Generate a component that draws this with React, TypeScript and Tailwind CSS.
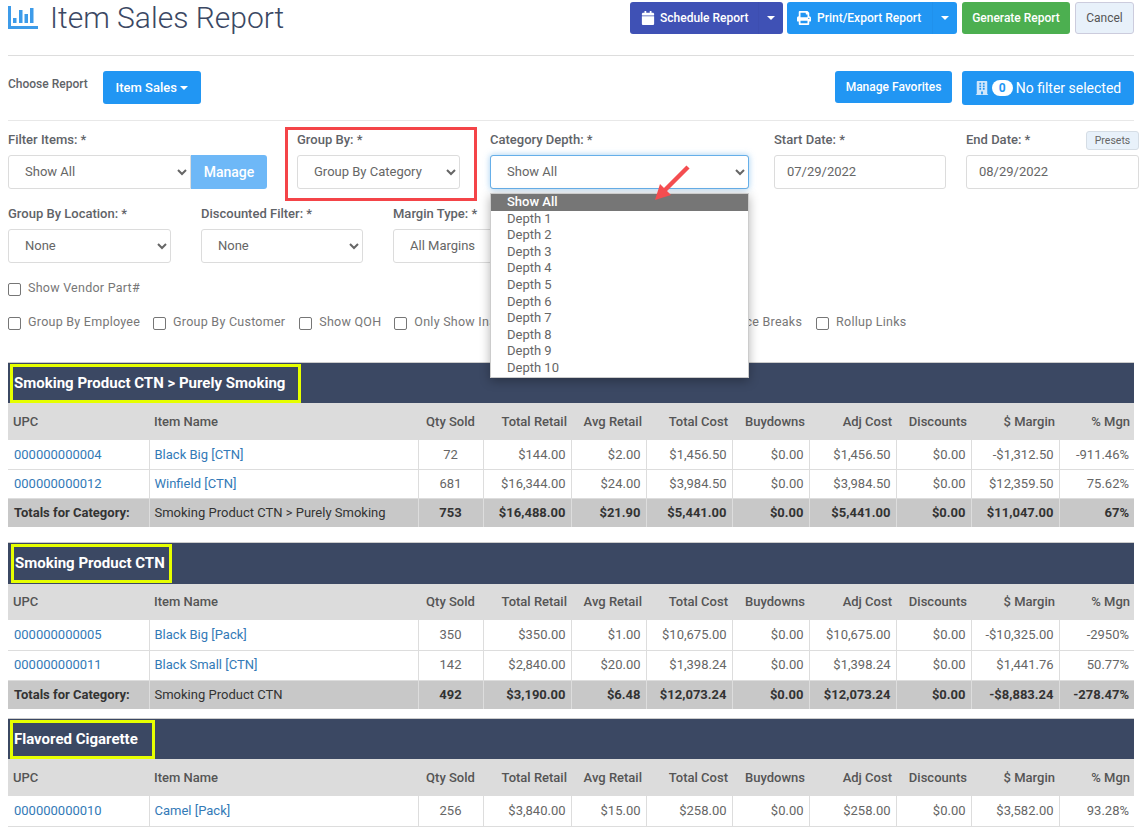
import React from 'react';
import { FaCalendar, FaPrint, FaBuilding } from 'react-icons/fa';

const COLS = ['w-[141px]', 'w-[269px]', 'w-[65px]', 'w-[88px]', 'w-[75px]', 'w-[86px]', 'w-[77px]', 'w-[87px]', 'w-[75px]', 'w-[88px]', 'w-[75px]'];
const HEADERS = ['UPC', 'Item Name', 'Qty Sold', 'Total Retail', 'Avg Retail', 'Total Cost', 'Buydowns', 'Adj Cost', 'Discounts', '$ Margin', '% Mgn'];
const DEPTHS = ['Depth 1', 'Depth 2', 'Depth 3', 'Depth 4', 'Depth 5', 'Depth 6', 'Depth 7', 'Depth 8', 'Depth 9', 'Depth 10'];

const GROUPS = [
  {
    title: 'Smoking Product CTN > Purely Smoking',
    boxClass: 'w-[291px]',
    bandClass: 'h-[41px]',
    headClass: 'h-[37px]',
    rowClass: 'h-[29px]',
    wrap: 'mb-[15px]',
    rows: [
      ['000000000004', 'Black Big [CTN]', '72', '$144.00', '$2.00', '$1,456.50', '$0.00', '$1,456.50', '$0.00', '-$1,312.50', '-911.46%'],
      ['000000000012', 'Winfield [CTN]', '681', '$16,344.00', '$24.00', '$3,984.50', '$0.00', '$3,984.50', '$0.00', '$12,359.50', '75.62%'],
    ],
    totals: ['Totals for Category:', 'Smoking Product CTN > Purely Smoking', '753', '$16,488.00', '$21.90', '$5,441.00', '$0.00', '$5,441.00', '$0.00', '$11,047.00', '67%'],
  },
  {
    title: 'Smoking Product CTN',
    boxClass: 'ml-[1px] w-[161px]',
    bandClass: 'h-[42px]',
    headClass: 'h-[36px]',
    rowClass: 'h-[30px]',
    wrap: 'mb-[9px]',
    rows: [
      ['000000000005', 'Black Big [Pack]', '350', '$350.00', '$1.00', '$10,675.00', '$0.00', '$10,675.00', '$0.00', '-$10,325.00', '-2950%'],
      ['000000000011', 'Black Small [CTN]', '142', '$2,840.00', '$20.00', '$1,398.24', '$0.00', '$1,398.24', '$0.00', '$1,441.76', '50.77%'],
    ],
    totals: ['Totals for Category:', 'Smoking Product CTN', '492', '$3,190.00', '$6.48', '$12,073.24', '$0.00', '$12,073.24', '$0.00', '-$8,883.24', '-278.47%'],
  },
  {
    title: 'Flavored Cigarette',
    boxClass: 'w-[145px]',
    bandClass: 'h-[41px]',
    headClass: 'h-[37px]',
    rowClass: 'h-[30px]',
    wrap: '',
    rows: [['000000000010', 'Camel [Pack]', '256', '$3,840.00', '$15.00', '$258.00', '$0.00', '$258.00', '$0.00', '$3,582.00', '93.28%']],
    totals: null,
  },
];

const align = (i: number) => (i < 2 ? 'text-left' : i === 2 ? 'text-center' : 'text-right');

function Label({ children }: { children: React.ReactNode }) {
  return <div className="h-[18px] text-[13px] leading-[18px] font-medium text-[#5f6368]">{children}</div>;
}

function Field({ label, value, className }: { label: string; value: string; className: string }) {
  return (
    <div className={className}>
      <Label>{label}</Label>
      <select className="mt-[6px] h-[34px] w-full rounded-[3px] border border-[#dcdcdc] bg-white pb-[2px] pl-[12px] text-[13px] text-[#666]" defaultValue={value}>
        <option>{value}</option>
      </select>
    </div>
  );
}

function DateField({ label, value, className }: { label: string; value: string; className: string }) {
  return (
    <div className={className}>
      <Label>{label}</Label>
      <div className="mt-[6px] flex h-[34px] items-center rounded-[3px] border border-[#dcdcdc] bg-white pl-[12px] text-[13px] text-[#666]">{value}</div>
    </div>
  );
}

function Check({ label, className }: { label: string; className?: string }) {
  return (
    <label className={`flex items-center gap-[7px] text-[12.5px] whitespace-nowrap text-[#777] tracking-[0.25px] ${className ?? ''}`}>
      <span className="mt-[2px] h-[13px] w-[13px] shrink-0 rounded-[2px] border border-[#767676] bg-white" />
      {label}
    </label>
  );
}

function Caret() {
  return <span className="inline-block h-0 w-0 border-x-[4px] border-t-[4px] border-x-transparent border-t-white" />;
}

function Group({ group }: { group: (typeof GROUPS)[number] }) {
  return (
    <div className={group.wrap}>
      <div className={`flex items-center border-t border-[#ccc] bg-[#3b4863] pl-[2px] ${group.bandClass}`}>
        <div className={`flex h-[39px] items-center border-[3px] border-[#e6ff00] pl-[1px] text-[15px] font-bold text-white ${group.boxClass}`}>{group.title}</div>
      </div>
      <table className="w-full table-fixed border-collapse text-[13px]">
        <colgroup>
          {COLS.map((c, i) => (
            <col key={i} className={c} />
          ))}
        </colgroup>
        <thead>
          <tr className={`bg-[#dcdcdc] ${group.headClass}`}>
            {HEADERS.map((h, i) => (
              <th key={h} className={`font-medium text-[#555] ${i < 2 ? 'px-[5px]' : 'px-[4px]'} ${align(i)}`}>
                {h}
              </th>
            ))}
          </tr>
        </thead>
        <tbody>
          {group.rows.map((r) => (
            <tr key={r[0]} className={`border-b border-[#ddd] bg-white ${group.rowClass}`}>
              {r.map((v, i) => (
                <td key={i} className={`border-r border-[#ddd] last:border-r-0 ${i === 0 ? 'px-[6px]' : 'px-[5px]'} ${i < 2 ? 'text-[#337ab7]' : 'text-[#666]'} ${align(i)}`}>
                  {v}
                </td>
              ))}
            </tr>
          ))}
          {group.totals && (
            <tr className="h-[29px] bg-[#c8c8c8]">
              {group.totals.map((v, i) => (
                <td key={i} className={`overflow-hidden border-r border-[#ddd] whitespace-nowrap last:border-r-0 text-[#333] ${i === 0 ? 'px-[6px]' : 'px-[5px]'} ${i === 1 ? 'font-normal' : 'font-bold'} ${align(i)}`}>
                  {v}
                </td>
              ))}
            </tr>
          )}
        </tbody>
      </table>
    </div>
  );
}

export default function App() {
  return (
    <div className="relative h-[829px] w-[1146px] overflow-hidden bg-white pl-[8px] pr-[12px] font-['Roboto',sans-serif]">
      <div className="flex h-[56px] items-start border-b border-[#ddd] pt-[2px]">
        <svg viewBox="0 0 30 23" className="mt-[4px] h-[23px] w-[30px] text-[#3d9be9]" fill="currentColor">
          <rect x="0" y="0" width="3" height="23" />
          <rect x="0" y="20" width="30" height="3" />
          <rect x="5" y="12" width="3.5" height="5" />
          <rect x="11" y="4" width="3.5" height="13" />
          <rect x="16.5" y="8" width="3.5" height="9" />
          <rect x="22" y="2" width="3.5" height="15" />
        </svg>
        <h1 className="ml-[12px] text-[30px] leading-[32px] font-light text-[#3b4863]">Item Sales Report</h1>
        <div className="ml-auto flex h-[32px] items-stretch text-[12px] font-medium text-white">
          <button className="flex w-[153px] items-center justify-between rounded-[3px] bg-[#3f51b5]">
            <span className="flex items-center gap-[5px] pl-[11px]">
              <FaCalendar className="text-[14px]" />
              Schedule Report
            </span>
            <span className="flex h-full w-[25px] items-center justify-center border-l border-[#3d4eb0]">
              <Caret />
            </span>
          </button>
          <button className="ml-[4px] flex w-[170px] items-center justify-between rounded-[3px] bg-[#2196f3]">
            <span className="flex items-center gap-[6px] pl-[10px]">
              <FaPrint className="text-[14px]" />
              Print/Export Report
            </span>
            <span className="flex h-full w-[25px] items-center justify-center border-l border-[#2091ec]">
              <Caret />
            </span>
          </button>
          <button className="ml-[5px] w-[108px] rounded-[3px] bg-[#4caf50]">Generate Report</button>
          <button className="ml-[5px] w-[59px] rounded-[3px] border border-[#ccd] bg-[#e8f1fa] font-normal text-[#555]">Cancel</button>
        </div>
      </div>

      <div className="flex h-[65px] items-start border-b border-[#e8e8e8] pt-[15px]">
        <span className="mt-[4px] text-[12px] font-medium text-[#5f6368]">Choose Report</span>
        <button className="ml-[15px] flex h-[33px] w-[98px] items-center justify-center gap-[3px] rounded-[3px] bg-[#2196f3] text-[13px] font-medium text-white">
          Item Sales <Caret />
        </button>
        <button className="ml-auto h-[32px] w-[117px] rounded-[3px] bg-[#2196f3] text-[12px] font-medium text-white">Manage Favorites</button>
        <button className="ml-[10px] flex h-[34px] w-[172px] items-center justify-center gap-[3px] rounded-[3px] bg-[#2196f3] text-[14px] text-white">
          <FaBuilding className="text-[14px] text-[#cfe6fb]" />
          <span className="flex h-[16px] w-[21px] items-center justify-center rounded-full bg-white text-[12px] font-bold text-[#2196f3]">0</span>
          No filter selected
        </button>
      </div>

      <div className="mt-[10px] flex h-[62px] w-[1131px]">
        <div className="w-[259px]">
          <Label>Filter Items: *</Label>
          <div className="mt-[6px] flex">
            <select className="h-[34px] w-[183px] rounded-l-[3px] border border-[#dcdcdc] bg-white pb-[2px] pl-[12px] text-[13px] text-[#666]" defaultValue="Show All">
              <option>Show All</option>
            </select>
            <button className="h-[34px] w-[76px] rounded-r-[3px] bg-[#6eb8f7] text-[14px] font-medium text-white">Manage</button>
          </div>
        </div>
        <Field label="Group By: *" value="Group By Category" className="ml-[30px] w-[163px]" />
        <Field label="Category Depth: *" value="Show All" className="ml-[30px] w-[259px]" />
        <DateField label="Start Date: *" value="07/29/2022" className="ml-[25px] w-[172px]" />
        <DateField label="End Date: *" value="08/29/2022" className="ml-[20px] w-[173px]" />
      </div>

      <div className="mt-[12px] flex h-[58px]">
        <Field label="Group By Location: *" value="None" className="w-[163px]" />
        <Field label="Discounted Filter: *" value="None" className="ml-[30px] w-[162px]" />
        <Field label="Margin Type: *" value="All Margins" className="ml-[30px] w-[163px]" />
      </div>

      <div className="mt-[16px] h-[19px]">
        <Check label="Show Vendor Part#" />
      </div>
      <div className="mt-[15px] flex h-[18px]">
        <Check label="Group By Employee" />
        <Check label="Group By Customer" className="ml-[13px]" />
        <Check label="Show QOH" className="ml-[14px]" />
        <Check label="Only Show Inactive Items" className="ml-[13px] w-[126px]" />
        <Check label="Show Price Breaks" className="ml-[154px]" />
        <Check label="Rollup Links" className="ml-[14px]" />
      </div>

      <div className="mt-[31px] w-[1126px]">
        {GROUPS.map((g) => (
          <Group key={g.title} group={g} />
        ))}
      </div>

      {/* things floating over the page */}
      <button className="absolute left-[1086px] top-[131px] h-[19px] w-[53px] rounded-[3px] border border-[#d5dde5] bg-[#e8f1fa] text-[10.5px] text-[#666]">Presets</button>
      <div className="pointer-events-none absolute left-[285px] top-[127px] h-[74px] w-[192px] border-[3px] border-[#f44448]" />
      <div className="pointer-events-none absolute left-[490px] top-[155px] h-[34px] w-[259px] rounded-[3px] border border-[#66afe9] shadow-[0_0_6px_rgba(102,175,233,0.6)]" />
      <div className="absolute left-[490px] top-[193px] w-[259px] border border-[#ccc] bg-white text-[13px] leading-[16.6px] text-[#666] shadow-[0_3px_10px_rgba(0,0,0,0.3)]">
        <div className="bg-[#767676] pl-[16px] font-medium text-white">Show All</div>
        {DEPTHS.map((d) => (
          <div key={d} className="pl-[16px]">
            {d}
          </div>
        ))}
      </div>
      <svg viewBox="0 0 40 40" className="pointer-events-none absolute left-[652px] top-[164px] h-[40px] w-[40px]">
        <path d="M36 3 L13 26" stroke="#f44d50" strokeWidth="4.5" fill="none" />
        <path d="M3 36 L8 20 L19 31 Z" fill="#f44d50" />
      </svg>
    </div>
  );
}
